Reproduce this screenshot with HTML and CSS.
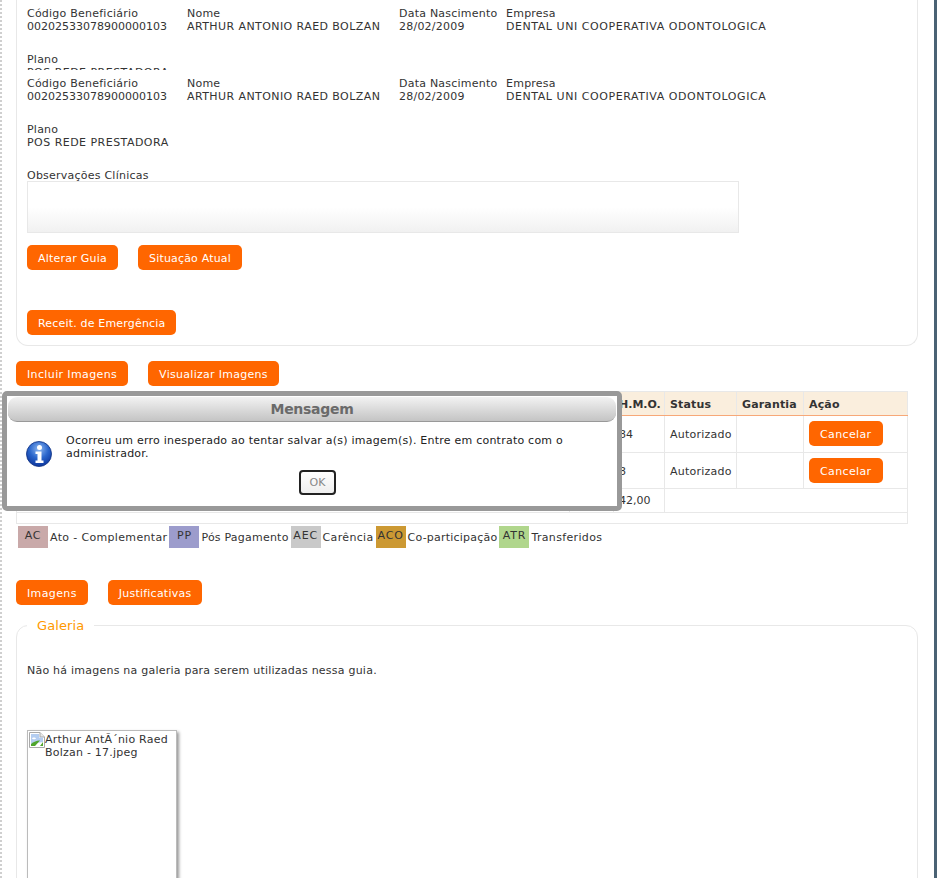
FILE: index.html
```html
<!DOCTYPE html>
<html lang="pt-BR">
<head>
<meta charset="utf-8">
<title>Guia</title>
<link rel="stylesheet" href="styles.css">
</head>
<body>
<div class="page">
  <section class="box">
    <div class="info info-clipped">
      <div class="info-grid">
        <div>Código Beneficiário<br><span class="num">00202533078900000103</span></div>
        <div>Nome<br><span class="upper">ARTHUR ANTONIO RAED BOLZAN</span></div>
        <div>Data Nascimento<br>28/02/2009</div>
        <div>Empresa<br><span class="upper upper-wide">DENTAL UNI COOPERATIVA ODONTOLOGICA</span></div>
        <div class="wide">Plano<br><span class="upper plan">POS REDE PRESTADORA</span></div>
      </div>
    </div>
    <div class="info">
      <div class="info-grid">
        <div>Código Beneficiário<br><span class="num">00202533078900000103</span></div>
        <div>Nome<br><span class="upper">ARTHUR ANTONIO RAED BOLZAN</span></div>
        <div>Data Nascimento<br>28/02/2009</div>
        <div>Empresa<br><span class="upper upper-wide">DENTAL UNI COOPERATIVA ODONTOLOGICA</span></div>
        <div class="wide">Plano<br><span class="upper plan">POS REDE PRESTADORA</span></div>
      </div>
    </div>
    <div class="obs-label">Observações Clínicas</div>
    <div class="obs-field"></div>
    <div class="btn-row row-guide">
      <a class="btn">Alterar Guia</a>
      <a class="btn btn-tight">Situação Atual</a>
    </div>
    <div class="btn-row row-emerg">
      <a class="btn btn-tight">Receit. de Emergência</a>
    </div>
  </section>

  <div class="btn-row row-images">
    <a class="btn btn-wide">Incluir Imagens</a>
    <a class="btn btn-mid">Visualizar Imagens</a>
  </div>

  <table class="grid">
    <colgroup>
      <col class="c1"><col class="c2"><col class="c3"><col class="c4"><col class="c5"><col class="c6">
    </colgroup>
    <tr class="r-head">
      <th></th><th></th><th class="hmo">H.M.O.</th><th>Status</th><th>Garantia</th><th>Ação</th>
    </tr>
    <tr class="r-a">
      <td></td><td></td><td class="num">84</td><td>Autorizado</td><td></td><td><a class="btn btn-wide">Cancelar</a></td>
    </tr>
    <tr class="r-b">
      <td></td><td></td><td class="num low">8</td><td class="low">Autorizado</td><td></td><td><a class="btn btn-wide">Cancelar</a></td>
    </tr>
    <tr class="r-total">
      <td></td><td></td><td class="num">42,00</td><td colspan="3"></td>
    </tr>
    <tr class="r-empty"><td colspan="6"></td></tr>
  </table>

  <div class="legend">
    <span class="swatch s-ac">AC</span><span>Ato - Complementar</span>
    <span class="swatch s-pp">PP</span><span class="legend-tight">Pós Pagamento</span>
    <span class="swatch s-aec">AEC</span><span>Carência</span>
    <span class="swatch s-aco">ACO</span><span class="legend-tight">Co-participação</span>
    <span class="swatch s-atr">ATR</span><span>Transferidos</span>
  </div>

  <div class="btn-row row-gallery">
    <a class="btn btn-wide">Imagens</a>
    <a class="btn">Justificativas</a>
  </div>

  <fieldset class="gallery">
    <legend>Galeria</legend>
    <p class="gallery-empty">Não há imagens na galeria para serem utilizadas nessa guia.</p>
    <div class="thumb">
      <svg class="broken" width="16" height="16" viewBox="0 0 16 16" aria-hidden="true">
        <path d="M0.5 0.5H11L15.5 5V15.5H0.5Z" fill="#fff" stroke="#a9a9a9"/>
        <path d="M11 0.5V5H15.5" fill="#e8e8e8" stroke="#a9a9a9"/>
        <path d="M2 2H10V5.500H14V10L2 12Z" fill="#b4cdf0"/>
        <path d="M3 6.500C3 5.300 6.500 5 7 6.500C6.500 7.500 3.500 7.500 3 6.500Z" fill="#fff"/>
        <path d="M2 14V12C5 9.500 9 8 11 8.500L6 14Z" fill="#4fa52c"/>
        <path d="M11 14L14 10V14Z" fill="#4fa52c"/>
      </svg>
      <span class="alt">Arthur AntÃ´nio Raed Bolzan - 17.jpeg</span>
    </div>
  </fieldset>

  <div class="modal">
    <div class="modal-title">Mensagem</div>
    <div class="modal-body">
      <svg class="info-icon" width="26" height="26" viewBox="0 0 26 26" aria-hidden="true">
        <defs>
          <radialGradient id="orb" cx="50%" cy="30%" r="75%">
            <stop offset="0" stop-color="#8fb8f0"/>
            <stop offset="0.5" stop-color="#2a66cc"/>
            <stop offset="1" stop-color="#0a2f96"/>
          </radialGradient>
        </defs>
        <circle cx="13" cy="13" r="12.500" fill="url(#orb)" stroke="#0d2f80" stroke-width="0.800"/>
        <circle cx="13.500" cy="6.500" r="2.500" fill="#fff"/>
        <path d="M9.500 10.500H15.500V19.500H17.500V22H9.500V19.500H11.500V13H9.500Z" fill="#fff"/>
      </svg>
      <p class="modal-text">Ocorreu um erro inesperado ao tentar salvar a(s) imagem(s). Entre em contrato com o administrador.</p>
    </div>
    <div class="modal-actions"><button class="ok" type="button">OK</button></div>
  </div>
</div>
</body>
</html>
```
FILE: styles.css
```css
html, body {
  margin: 0;
  padding: 0;
  background: #fff;
}

.page {
  position: relative;
  box-sizing: border-box;
  width: 937px;
  height: 878px;
  overflow: hidden;
  padding-left: 14px;
  border-left: 2px dotted #cfcfcf;
  border-right: 3px solid #4a6274;
  font: 11px/13px "DejaVu Sans", Verdana, sans-serif;
  letter-spacing: 0.23px;
  color: #333;
}

.num { letter-spacing: 0; }
.upper { letter-spacing: 0.42px; }
.upper-wide { letter-spacing: 0.56px; }
.plan { letter-spacing: 0.47px; }

.box {
  box-sizing: border-box;
  width: 902px;
  padding: 7px 10px 10px;
  border: 1px solid #e8e8e8;
  border-top: 0;
  border-radius: 0 0 12px 12px;
}

.info { height: 80px; }
.info-clipped { height: 63px; overflow: hidden; margin-bottom: 7px; }

.info-grid {
  display: grid;
  grid-template-columns: 160px 212px 107px auto;
  row-gap: 20px;
  white-space: nowrap;
}

.wide { grid-column: 1 / -1; }

.obs-label { margin-top: 12px; }

.obs-field {
  box-sizing: border-box;
  width: 712px;
  height: 52px;
  margin-top: -1px;
  border: 1px solid #e8e8e8;
  background: linear-gradient(#fff 50%, #f1f1f1);
}

.btn-row { display: flex; gap: 20px; }
.row-guide { margin-top: 12px; }
.row-emerg { margin-top: 40px; }
.row-images { margin-top: 15px; }
.row-gallery { margin-top: 32px; }

.btn {
  display: inline-block;
  box-sizing: border-box;
  height: 25px;
  padding: 0 11px;
  border-radius: 5px;
  background: #ff6600;
  color: #fff;
  line-height: 27px;
  white-space: nowrap;
}

.btn-tight { letter-spacing: 0.18px; }
.btn-mid { letter-spacing: 0.29px; }
.btn-wide { letter-spacing: 0.37px; }

.grid {
  box-sizing: border-box;
  width: 892px;
  margin-top: 5px;
  border-collapse: collapse;
  table-layout: fixed;
}

.c1 { width: 553px; }
.c2 { width: 44px; }
.c3 { width: 51px; }
.c4 { width: 72px; }
.c5 { width: 67px; }
.c6 { width: 104px; }

.grid th, .grid td {
  padding: 0 5px;
  border: 1px solid #e8e8e8;
  text-align: left;
  white-space: nowrap;
}

.grid th {
  padding-top: 2px;
  background: #faeedd;
  border-bottom-color: #f7a878;
  font-weight: bold;
  letter-spacing: 0.15px;
}

.grid .hmo { letter-spacing: 0; }
.grid .low { padding-top: 2px; }
.r-a .btn { position: relative; top: -1px; }

.r-head { height: 24px; }
.r-a { height: 37px; }
.r-b { height: 36px; }
.r-total { height: 24px; }
.r-empty { height: 11px; }

.legend {
  display: flex;
  align-items: center;
  gap: 2px;
  margin: 2px 0 0 2px;
  letter-spacing: 0.34px;
}

.legend-tight { letter-spacing: 0.22px; }

.swatch {
  box-sizing: border-box;
  width: 30px;
  height: 22px;
  padding-top: 3px;
  text-align: center;
  letter-spacing: 0.8px;
}

.s-ac { background: #c9a9a9; }
.s-pp { background: #9c9ccc; }
.s-aec { background: #c9c9c9; }
.s-aco { background: #cc9933; }
.s-atr { background: #b0d68c; }

.gallery {
  box-sizing: border-box;
  width: 902px;
  height: 400px;
  margin: 12px 0 0;
  padding: 0 10px;
  border: 1px solid #e8e8e8;
  border-radius: 12px;
}

.gallery legend {
  padding: 2px 10px 0;
  color: #ff9900;
  font-size: 13px;
  line-height: 14px;
  letter-spacing: 0.1px;
}

.gallery-empty { margin: 31px 0 0; }

.thumb {
  display: flex;
  box-sizing: border-box;
  width: 150px;
  height: 300px;
  margin-top: 53px;
  padding: 1px;
  border: 1px solid #bbb;
  box-shadow: 2px 2px 3px #999;
}

.broken { flex: none; }
.alt { display: block; margin-top: 1px; }

.modal {
  position: absolute;
  left: 0;
  top: 391px;
  box-sizing: border-box;
  width: 620px;
  height: 120px;
  border: 5px solid #999;
  border-radius: 5px;
  background: #fff;
  color: #222;
}

.modal-title {
  box-sizing: border-box;
  height: 25px;
  margin: 1px 1px 0;
  border-bottom: 1px solid #999;
  border-radius: 9px;
  background: linear-gradient(#f2f2f2, #c4c4c4);
  color: #6a6a6a;
  font-size: 14px;
  font-weight: bold;
  line-height: 24px;
  letter-spacing: -0.3px;
  text-align: center;
}

.modal-body {
  display: flex;
  align-items: flex-start;
  padding: 12px 20px 0 19px;
}

.info-icon { flex: none; margin-top: 7px; }
.modal-text { margin: 0 0 0 14px; }

.modal-actions { display: flex; justify-content: center; margin-top: 3px; padding-left: 11px; }

.ok {
  box-sizing: border-box;
  width: 37px;
  height: 25px;
  padding: 0;
  border: 2px solid #222;
  border-radius: 4px;
  background: linear-gradient(#fff, #eee);
  color: #888;
  font: inherit;
}
```
